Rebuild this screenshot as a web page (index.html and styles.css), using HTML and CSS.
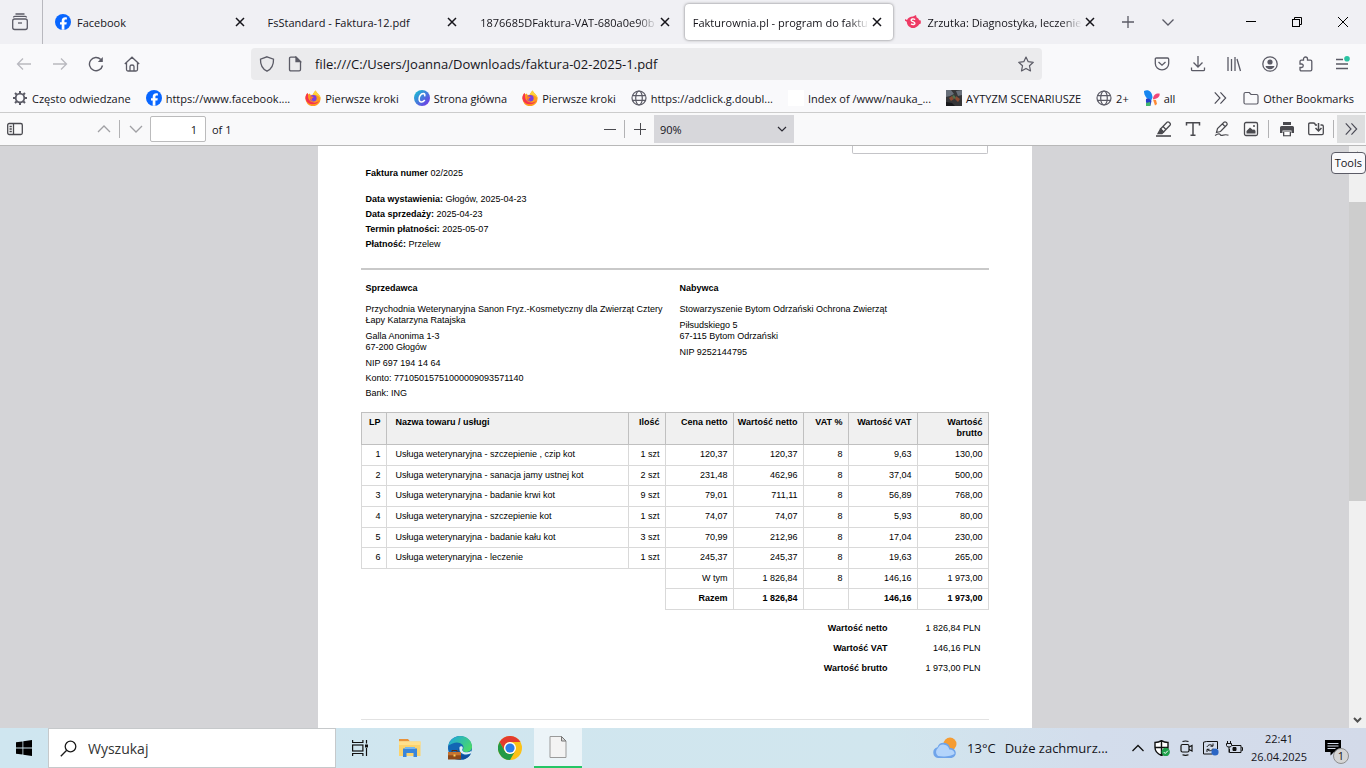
FILE: index.html
```html
<!DOCTYPE html>
<html lang="pl">
<head>
    <meta charset="UTF-8">
    <meta name="viewport" content="width=device-width, initial-scale=1.0">
    <title>Fakturownia.pl - program do faktur</title>
    <link rel="stylesheet" href="styles.css">
</head>
<body>
    <svg class="sprite" aria-hidden="true">
        <symbol id="i-close" viewBox="0 0 16 16"><path d="M4 4l8 8M12 4l-8 8" fill="none" stroke="#15141a" stroke-width="1.5"/></symbol>
        <symbol id="i-facebook" viewBox="0 0 16 16">
            <circle cx="8" cy="8" r="8" fill="#0866ff"/>
            <path d="M6.7 15.8v-5.2H5V8.2h1.7V7.1c0-2.6 1.2-3.8 3.7-3.8.5 0 1.1.1 1.5.2v2.1h-1.1c-1 0-1.4.4-1.4 1.3v1.3h2.4l-.4 2.4H9.4v5.2z" fill="#fff"/>
        </symbol>
        <symbol id="i-firefox" viewBox="0 0 16 16">
            <path d="M10.3.6c1 1.3 1.6 2 2.3 2.7 1.7 1.6 3 3.2 3 5.4A7.6 7.6 0 0 1 .4 8.5c0-2.4.9-4.4 2.1-5.5l.6 1.6c.5-.5 1.1-.8 1.7-1l.5 1.2 2.2.2C8.3 3.4 9.3 2.4 10.3.6z" fill="#ff9a1f"/>
            <path d="M10.3.6c1 1.3 1.6 2 2.3 2.7 1.7 1.6 3 3.2 3 5.4-1.1-2-2.4-3.3-4.6-3.7-1.4-.3-2.3-.2-3.5 0C8.3 3.4 9.3 2.4 10.3.6z" fill="#ffd43b"/>
            <path d="M.4 8.5c0-2.4.9-4.4 2.1-5.5l.6 1.6C2.5 8 4 12 8.5 12.6c2.5.3 4.7-.8 6-2.7A7.5 7.5 0 0 1 .4 8.5z" fill="#f6334f"/>
            <circle cx="8.3" cy="8.2" r="3.3" fill="#7a3fe0"/>
            <path d="M4.8 6.5c1.3-.5 2.3 0 3.8.4-.2 1-1.4 1-1.8 1.9-.3.9.3 1.6 1.3 1.9-2 .3-3.6-1.6-3.3-4.2z" fill="#ff7a2a"/>
        </symbol>
        <symbol id="i-globe" viewBox="0 0 16 16"><g fill="none" stroke="#5b5b66" stroke-width="1.2"><circle cx="8" cy="8" r="7"/><ellipse cx="8" cy="8" rx="3.3" ry="7"/><path d="M1.5 5.7h13M1.5 10.3h13"/></g></symbol>
        <symbol id="i-chevrons" viewBox="0 0 16 16"><path d="M2 1.5L8 8l-6 6.5M8.5 1.5l6 6.5-6 6.5" fill="none" stroke="#4a4a55" stroke-width="1.3"/></symbol>
    </svg>

    <header class="tabstrip">
        <button class="icon-btn recent" aria-label="Ostatnia aktywność">
            <svg width="18" height="18" viewBox="0 0 18 18" fill="none" stroke="#5b5b66" stroke-width="1.3"><path d="M2.5 4.5q0-1.2 1.2-1.2h10.6q1.2 0 1.2 1.2M4.5 1h9"/><rect x="1.7" y="6" width="14.6" height="10.5" rx="2"/><path d="M7 10h4"/></svg>
        </button>
        <nav class="tabs">
            <div class="tab">
                <svg class="favicon"><use href="#i-facebook"/></svg>
                <button class="tab-title">Facebook</button>
                <button class="tab-close" aria-label="Zamknij"><svg><use href="#i-close"/></svg></button>
            </div>
            <div class="tab">
                <button class="tab-title">FsStandard - Faktura-12.pdf</button>
                <button class="tab-close" aria-label="Zamknij"><svg><use href="#i-close"/></svg></button>
            </div>
            <div class="tab">
                <button class="tab-title fade">1876685DFaktura-VAT-680a0e90b</button>
                <button class="tab-close" aria-label="Zamknij"><svg><use href="#i-close"/></svg></button>
            </div>
            <div class="tab active">
                <button class="tab-title fade">Fakturownia.pl - program do faktu</button>
                <button class="tab-close" aria-label="Zamknij"><svg><use href="#i-close"/></svg></button>
            </div>
            <div class="tab">
                <svg class="favicon" viewBox="0 0 16 16"><path d="M0 5l2 1c1-2 3-3.5 6-3.5l3-1.5.5 2.2c1.5.8 2.3 1.8 2.8 3l1.5.4v3l-1.6.6c-.6 1.2-1.5 2-2.4 2.6L9.5 14H6.5L4 12.5C2.5 11.3 1.8 9.7 1.8 7.8L0 6.8z" fill="#ee3a64"/><path d="M10.2 5.5C8 4.3 6 5 6.2 6.5c.2 1.4 3.6 1 3.7 2.7.1 1.4-2 1.8-3.9.6" fill="none" stroke="#fff" stroke-width="1.4"/></svg>
                <button class="tab-title fade">Zrzutka: Diagnostyka, leczenie</button>
                <button class="tab-close" aria-label="Zamknij"><svg><use href="#i-close"/></svg></button>
            </div>
        </nav>
        <button class="icon-btn" aria-label="Nowa karta"><svg width="14" height="14" viewBox="0 0 14 14" fill="none" stroke="#5b5b66" stroke-width="1.3"><path d="M7 1v12M1 7h12"/></svg></button>
        <button class="icon-btn list-tabs" aria-label="Lista kart"><svg width="14" height="14" viewBox="0 0 14 14" fill="none" stroke="#5b5b66" stroke-width="1.3"><path d="M1.5 4.5L7 10l5.5-5.5"/></svg></button>
        <div class="window-buttons">
            <button aria-label="Minimalizuj"><svg width="12" height="12" viewBox="0 0 12 12" fill="none" stroke="#000"><path d="M1 5.5h10"/></svg></button>
            <button aria-label="Przywróć"><svg width="12" height="12" viewBox="0 0 12 12" fill="none" stroke="#000"><rect x="1.5" y="3.5" width="7" height="7"/><path d="M3.5 3.5v-2h7v7h-2"/></svg></button>
            <button aria-label="Zamknij okno"><svg width="12" height="12" viewBox="0 0 12 12" fill="none" stroke="#000"><path d="M1 1l10 10M11 1L1 11"/></svg></button>
        </div>
    </header>

    <div class="navbar">
        <div class="nav-buttons">
            <button class="icon-btn" aria-label="Wstecz" disabled><svg width="16" height="16" viewBox="0 0 16 16" fill="none" stroke="#b9b9bf" stroke-width="1.3"><path d="M15 8H2M7 2.5L1.5 8 7 13.5"/></svg></button>
            <button class="icon-btn" aria-label="Dalej" disabled><svg width="16" height="16" viewBox="0 0 16 16" fill="none" stroke="#b9b9bf" stroke-width="1.3"><path d="M1 8h13M9 2.5L14.5 8 9 13.5"/></svg></button>
            <button class="icon-btn" aria-label="Odśwież"><svg width="16" height="16" viewBox="0 0 16 16" fill="none" stroke="#5b5b66" stroke-width="1.4"><path d="M14.5 9.5A6.6 6.6 0 1 1 12.8 3.5"/><path d="M14.8 1v5h-5z" fill="#5b5b66" stroke="none"/></svg></button>
            <button class="icon-btn" aria-label="Strona startowa"><svg width="16" height="16" viewBox="0 0 16 16" fill="none" stroke="#5b5b66" stroke-width="1.3"><path d="M.8 8L8 1.2 15.2 8M2.5 7v6.5q0 1.5 1.5 1.5h8q1.5 0 1.5-1.5V7M6 15v-4.5q0-1.5 2-1.5t2 1.5V15"/></svg></button>
        </div>
        <div class="urlbar">
            <svg width="16" height="16" viewBox="0 0 16 16" fill="none" stroke="#5b5b66" stroke-width="1.3"><path d="M8 .8l6.5 2.4c.2 5-1.5 9.5-6.5 12-5-2.5-6.700-7-6.5-12z"/></svg>
            <svg width="16" height="16" viewBox="0 0 16 16" fill="none" stroke="#5b5b66" stroke-width="1.3"><path d="M3.8 1.2H9l4.5 4.5v7.8q0 1.3-1.3 1.3H3.8q-1.3 0-1.3-1.3V2.5q0-1.3 1.3-1.3z"/><path d="M9 1.2v4.5h4.5z" fill="#5b5b66"/></svg>
            <input class="url" type="text" aria-label="Adres" value="file:///C:/Users/Joanna/Downloads/faktura-02-2025-1.pdf">
            <button class="icon-btn" aria-label="Dodaj zakładkę"><svg width="16" height="16" viewBox="0 0 16 16" fill="none" stroke="#5b5b66" stroke-width="1.2" stroke-linejoin="round"><path d="M8 1l2.2 4.7 5.1.6-3.8 3.5 1 5.1L8 12.4l-4.5 2.5 1-5.1L.7 6.3l5.1-.6z"/></svg></button>
        </div>
        <div class="nav-tools">
            <button class="icon-btn" aria-label="Pocket"><svg width="16" height="16" viewBox="0 0 16 16" fill="none" stroke="#5b5b66" stroke-width="1.3"><path d="M2.5 2h11q1.2 0 1.2 1.2V7.5a6.7 6.3 0 0 1-13.4 0V3.2Q1.3 2 2.5 2z"/><path d="M4.5 6L8 9.2 11.5 6"/></svg></button>
            <button class="icon-btn" aria-label="Pobrane"><svg width="16" height="16" viewBox="0 0 16 16" fill="none" stroke="#5b5b66" stroke-width="1.3"><path d="M8 0v10.5M3.5 6.5L8 11l4.5-4.5M1.5 11.5v2q0 1.2 1.2 1.2h10.6q1.2 0 1.2-1.2v-2"/></svg></button>
            <button class="icon-btn" aria-label="Biblioteka"><svg width="16" height="16" viewBox="0 0 16 16" fill="none" stroke="#5b5b66" stroke-width="1.3"><path d="M2 1v14M5.5 3v12M9 1v14M11 3l3.5 12"/></svg></button>
            <button class="icon-btn" aria-label="Konto"><svg width="16" height="16" viewBox="0 0 16 16"><circle cx="8" cy="8" r="7.2" fill="none" stroke="#5b5b66" stroke-width="1.3"/><circle cx="8" cy="6" r="2.6" fill="#5b5b66"/><path d="M3.5 10h9c-.5 2-2.2 3.2-4.5 3.2S4 12 3.5 10z" fill="#5b5b66"/></svg></button>
            <button class="icon-btn" aria-label="Rozszerzenia"><svg width="16" height="16" viewBox="0 0 16 16" fill="none" stroke="#5b5b66" stroke-width="1.3"><path d="M5.5 4.2V3a2 2 0 0 1 4 0v1.2h3q1.3 0 1.3 1.3v8q0 1.3-1.3 1.3H3.3Q2 14.8 2 13.5v-2h1.5a1.7 1.7 0 0 0 0-3.5H2V5.5q0-1.3 1.3-1.3z"/></svg></button>
            <button class="icon-btn" aria-label="Menu"><svg width="16" height="16" viewBox="0 0 16 16"><path d="M2 3.5h7M2 8h12M2 12.5h12" stroke="#5b5b66" stroke-width="1.3"/><circle cx="13" cy="2.8" r="2.8" fill="#2ac3a2"/></svg></button>
        </div>
    </div>

    <nav class="bookmarks">
        <a href="#"><svg viewBox="0 0 16 16" fill="none" stroke="#5b5b66"><circle cx="8" cy="8" r="4.3" stroke-width="1.8"/><path d="M8 1v2.5M8 12.5V15M1 8h2.5M12.5 8H15M3 3l1.8 1.8M11.2 11.2L13 13M13 3l-1.8 1.8M4.8 11.2L3 13" stroke-width="2"/></svg>Często odwiedzane</a>
        <a href="#"><svg><use href="#i-facebook"/></svg>https://www.facebook....</a>
        <a href="#"><svg><use href="#i-firefox"/></svg>Pierwsze kroki</a>
        <a href="#"><svg viewBox="0 0 16 16"><defs><linearGradient id="canva" x1="0" y1="0" x2="1" y2="1"><stop offset="0" stop-color="#12c8d0"/><stop offset="1" stop-color="#7a2be8"/></linearGradient></defs><circle cx="8" cy="8" r="8" fill="url(#canva)"/><path d="M10.500 6.300c.8-1.400.2-2.800-1.200-2.800-2.500.1-4.500 3.200-4.200 6 .3 3.200 3.700 3.300 5.700.5" fill="none" stroke="#fff" stroke-width="1.5"/></svg>Strona główna</a>
        <a href="#"><svg><use href="#i-firefox"/></svg>Pierwsze kroki</a>
        <a href="#"><svg><use href="#i-globe"/></svg>https://adclick.g.doubl...</a>
        <a href="#"><svg viewBox="0 0 16 16"><path d="M0 0h16v16H0z" fill="#fff"/></svg>Index of /www/nauka_...</a>
        <a href="#"><svg viewBox="0 0 16 16"><path d="M0 0h16v16H0z" fill="#363638"/><path d="M0 0h5l3 4-4 2-4 1zM10 1l6-1v5l-4 1z" fill="#69707a"/><path d="M3 8l3-2 2 3-3 2zM10 6l4 3-2 3-3-3z" fill="#8a4b32"/><path d="M6 6l2-1 2 3-2 1z" fill="#52714b"/><path d="M0 12l6 1 3 3H0z" fill="#17181b"/></svg>AYTYZM SCENARIUSZE</a>
        <a href="#"><svg><use href="#i-globe"/></svg>2+</a>
        <a href="#"><svg viewBox="0 0 16 16"><path d="M0 1c4-2 8 0 8.5 6.5L7 11C3 9 0 6 0 1z" fill="#1686f0"/><path d="M9 9c0-4 3-6 6.5-5.5.8 3-2 5.5-6.5 5.5z" fill="#ef4778"/><path d="M2 9c2-1 4.5 0 5.5 2l-1 4.5C3 16 1.5 13 2 9z" fill="#263ecb"/><path d="M2 13l4-1 .5 4H2z" fill="#43b66c"/><path d="M9 9.5l3 .5 1 4-2 1.5z" fill="#ff8a35"/></svg>all</a>
        <button class="icon-btn overflow" aria-label="Więcej zakładek"><svg width="14" height="14"><use href="#i-chevrons"/></svg></button>
        <a href="#"><svg viewBox="0 0 16 16" fill="none" stroke="#5b5b66" stroke-width="1.2"><path d="M2.5 2.5h3.8l1.7 2h5.5q1.5 0 1.5 1.5v6.5q0 1.5-1.5 1.5h-11Q1 14 1 12.5V4q0-1.5 1.5-1.5z"/></svg>Other Bookmarks</a>
    </nav>

    <div class="pdf-toolbar">
        <div class="group left">
            <button class="icon-btn sidebar-btn" aria-label="Panel boczny"><svg width="16" height="16" viewBox="0 0 16 16" fill="none" stroke="#4a4a4f" stroke-width="1.3"><rect x=".7" y="2.5" width="14.6" height="11" rx="1.5"/><path d="M6.5 2.5v11M2.5 5.5h2.3M2.5 8h2.3M2.5 10.5h2.3"/></svg></button>
            <button class="icon-btn" aria-label="Poprzednia strona" disabled><svg width="14" height="14" viewBox="0 0 14 14" fill="none" stroke="#a0a0a4" stroke-width="1.3"><path d="M1 10l6-6 6 6"/></svg></button>
            <span class="split"></span>
            <button class="icon-btn" aria-label="Następna strona" disabled><svg width="14" height="14" viewBox="0 0 14 14" fill="none" stroke="#a0a0a4" stroke-width="1.3"><path d="M1 4l6 6 6-6"/></svg></button>
            <input class="page-number" id="page" type="text" value="1">
            <label for="page">of 1</label>
        </div>
        <div class="group center">
            <button class="icon-btn" aria-label="Pomniejsz"><svg width="12" height="12" viewBox="0 0 12 12" stroke="#4a4a4f"><path d="M0 6.5h12"/></svg></button>
            <span class="split"></span>
            <button class="icon-btn" aria-label="Powiększ"><svg width="12" height="12" viewBox="0 0 12 12" stroke="#4a4a4f"><path d="M0 6.5h12M6.5 0v12"/></svg></button>
            <span class="zoom">
                <select aria-label="Powiększenie"><option>90%</option></select>
                <svg width="10" height="10" viewBox="0 0 10 10" fill="none" stroke="#2b2a33" stroke-width="1.2"><path d="M1 3l4 4 4-4"/></svg>
            </span>
        </div>
        <div class="group right">
            <button class="icon-btn" aria-label="Wyróżnij"><svg width="16" height="16" viewBox="0 0 16 16" fill="none" stroke="#4a4a4f" stroke-width="1.3"><path d="M0 15h15" stroke-width="1.6"/><path d="M4.5 8L11 1.2q1-.8 2 0l1 1q.8 1 0 2L7.5 11zM7 5.5l3 3"/><path d="M4.5 8L7.5 11 6 12.5H2z" fill="#4a4a4f"/></svg></button>
            <button class="icon-btn" aria-label="Tekst"><svg width="16" height="16" viewBox="0 0 16 16" fill="none" stroke="#4a4a4f" stroke-width="1.5"><path d="M1.5 4.5V1.8h13v2.7M8 1.8v12.5M5.5 14.3h5"/></svg></button>
            <button class="icon-btn" aria-label="Rysuj"><svg width="16" height="16" viewBox="0 0 16 16" fill="none" stroke="#4a4a4f" stroke-width="1.2"><path d="M2.5 11.5l1-4L10 1.2q1-.8 2 0l.8.8q.8 1 0 2L6.5 10.5zM8.5 3l3 3M1 14.5c4-2.5 5-1.5 5.5-.5 1.5 1.5 4-1.5 8 .3"/></svg></button>
            <button class="icon-btn" aria-label="Dodaj obraz"><svg width="16" height="16" viewBox="0 0 16 16" fill="none" stroke="#4a4a4f" stroke-width="1.3"><rect x="1.5" y="1.5" width="13" height="13" rx="1.5"/><path d="M3.5 12.5V10L7 6.5l3 2.5 1-.8 1.5 1.5v2.8z" fill="#4a4a4f" stroke="none"/><circle cx="11" cy="5" r="1" fill="#4a4a4f" stroke="none"/></svg></button>
            <span class="split"></span>
            <button class="icon-btn" aria-label="Drukuj"><svg width="16" height="16" viewBox="0 0 16 16" fill="#4a4a4f"><path d="M4 1h8v3H4zM2.5 5h11q1.5 0 1.5 1.5V12h-2.5V9.5h-9V12H1V6.5Q1 5 2.5 5z"/><path d="M4 10.5h8v4.8H4z"/><path d="M5.3 11h5.4v3.2H5.3z" fill="#fff"/></svg></button>
            <button class="icon-btn" aria-label="Zapisz"><svg width="16" height="16" viewBox="0 0 16 16" fill="none" stroke="#4a4a4f" stroke-width="1.3"><path d="M8.5 4H9M12.5 4H14q1.3 0 1.3 1.3v7q0 1.3-1.3 1.3H2Q.7 13.6.7 12.3v-9Q.7 2 2 2h3.5q1.5 0 2 2h1.5"/><path d="M10.5 2v7.5M7.5 7l3 3 3-3" stroke-width="1.5"/></svg></button>
            <span class="split"></span>
            <div class="tools">
                <button class="tools-btn" aria-label="Tools" aria-describedby="tools-tip"><svg width="14" height="14"><use href="#i-chevrons"/></svg></button>
                <span class="tooltip" id="tools-tip" role="tooltip">Tools</span>
            </div>
        </div>
    </div>

    <div class="viewer">
        <main class="canvas">
            <article class="sheet">
                <div class="place-box"></div>
                <section class="meta">
                    <p class="number"><b>Faktura numer</b> 02/2025</p>
                    <p><b>Data wystawienia:</b> Głogów, 2025-04-23</p>
                    <p><b>Data sprzedaży:</b> 2025-04-23</p>
                    <p><b>Termin płatności:</b> 2025-05-07</p>
                    <p><b>Płatność:</b> Przelew</p>
                </section>
                <section class="parties">
                    <div>
                        <h2>Sprzedawca</h2>
                        <p>Przychodnia Weterynaryjna Sanon Fryz.-Kosmetyczny dla Zwierząt Cztery<br>Łapy Katarzyna Ratajska</p>
                        <p class="address">Galla Anonima 1-3<br>67-200 Głogów</p>
                        <p>NIP 697 194 14 64</p>
                        <p>Konto: 77105015751000009093571140</p>
                        <p>Bank: ING</p>
                    </div>
                    <div>
                        <h2>Nabywca</h2>
                        <p>Stowarzyszenie Bytom Odrzański Ochrona Zwierząt</p>
                        <p class="address">Piłsudskiego 5<br>67-115 Bytom Odrzański</p>
                        <p>NIP 9252144795</p>
                    </div>
                </section>
                <table class="items">
                    <colgroup>
                        <col class="c-lp"><col><col class="c-qty"><col class="c-price"><col class="c-net"><col class="c-rate"><col class="c-vat"><col class="c-gross">
                    </colgroup>
                    <thead>
                        <tr><th>LP</th><th class="name">Nazwa towaru / usługi</th><th>Ilość</th><th>Cena netto</th><th>Wartość netto</th><th>VAT %</th><th>Wartość VAT</th><th>Wartość brutto</th></tr>
                    </thead>
                    <tbody>
                        <tr><td>1</td><td class="name">Usługa weterynaryjna - szczepienie , czip kot</td><td>1 szt</td><td>120,37</td><td>120,37</td><td>8</td><td>9,63</td><td>130,00</td></tr>
                        <tr><td>2</td><td class="name">Usługa weterynaryjna - sanacja jamy ustnej kot</td><td>2 szt</td><td>231,48</td><td>462,96</td><td>8</td><td>37,04</td><td>500,00</td></tr>
                        <tr><td>3</td><td class="name">Usługa weterynaryjna - badanie krwi kot</td><td>9 szt</td><td>79,01</td><td>711,11</td><td>8</td><td>56,89</td><td>768,00</td></tr>
                        <tr><td>4</td><td class="name">Usługa weterynaryjna - szczepienie kot</td><td>1 szt</td><td>74,07</td><td>74,07</td><td>8</td><td>5,93</td><td>80,00</td></tr>
                        <tr><td>5</td><td class="name">Usługa weterynaryjna - badanie kału kot</td><td>3 szt</td><td>70,99</td><td>212,96</td><td>8</td><td>17,04</td><td>230,00</td></tr>
                        <tr><td>6</td><td class="name">Usługa weterynaryjna - leczenie</td><td>1 szt</td><td>245,37</td><td>245,37</td><td>8</td><td>19,63</td><td>265,00</td></tr>
                        <tr><td class="blank" colspan="3"></td><td>W tym</td><td>1 826,84</td><td>8</td><td>146,16</td><td>1 973,00</td></tr>
                        <tr class="total"><td class="blank" colspan="3"></td><td>Razem</td><td>1 826,84</td><td></td><td>146,16</td><td>1 973,00</td></tr>
                    </tbody>
                </table>
                <dl class="summary">
                    <dt>Wartość netto</dt><dd>1 826,84 PLN</dd>
                    <dt>Wartość VAT</dt><dd>146,16 PLN</dd>
                    <dt>Wartość brutto</dt><dd>1 973,00 PLN</dd>
                </dl>
                <hr class="end-line">
            </article>
        </main>
        <div class="scrollbar">
            <svg width="9" height="6" viewBox="0 0 9 6" fill="none" stroke="#505050" stroke-width="1.5"><path d="M1 5l3.5-3.5L8 5"/></svg>
            <div class="track"><div class="thumb"></div></div>
            <svg width="9" height="6" viewBox="0 0 9 6" fill="none" stroke="#505050" stroke-width="2"><path d="M1 1l3.5 3.5L8 1"/></svg>
        </div>
    </div>

    <footer class="taskbar">
        <button class="start" aria-label="Start"><svg width="16" height="16" viewBox="0 0 16 16"><path d="M0 2.3L6.5 1.4v6.2H0zM7.3 1.3L16 0v7.6H7.3zM0 8.4h6.5v6.2L0 13.7zM7.3 8.4H16V16l-8.700-1.3z"/></svg></button>
        <label class="search">
            <svg width="17" height="17" viewBox="0 0 17 17" fill="none" stroke="#1b1b1b" stroke-width="1.3"><circle cx="10.5" cy="6.5" r="5.3"/><path d="M6.7 10.3L.8 16.2"/></svg>
            <input type="text" placeholder="Wyszukaj" aria-label="Wyszukaj">
        </label>
        <div class="apps">
            <button aria-label="Widok zadań"><svg width="16" height="16" viewBox="0 0 16 16" fill="none" stroke="#111" stroke-width="1.2"><path d="M.6 0v2.5h10.3V0M.6 16v-2.5h10.3V16M14.5 0v3.5M14.5 8v8"/><rect x=".6" y="5" width="10.3" height="6"/><path d="M13 4.5h3v3h-3z" fill="#111" stroke="none"/></svg></button>
            <button aria-label="Eksplorator plików"><svg width="24" height="24" viewBox="0 0 24 24"><path d="M1 3h9l2 2.5H1z" fill="#e8923a"/><path d="M1 5.5h21.5V20H1z" fill="#fcd36b"/><path d="M1 5.5h21.5V9H1z" fill="#ffe08c"/><path d="M5 12.5h14V21h-3.5v-4h-7v4H5z" fill="#3a86da"/><path d="M7 11h10v2H7z" fill="#74b7f0"/></svg></button>
            <button aria-label="Edge"><svg width="24" height="24" viewBox="0 0 24 24"><defs><linearGradient id="edge" x1="0" y1="0" x2="1" y2=".6"><stop offset="0" stop-color="#1ba3e6"/><stop offset="1" stop-color="#48d86c"/></linearGradient></defs><circle cx="12" cy="12" r="12" fill="#1267b4"/><path d="M.3 9.5C2 3.5 7 0 12 0c7 0 12 5 12 10.5 0 4-3 5.5-6 5.5-2.5 0-4-1-3-2.5 2-4-2-7-6-7-3 0-6 1.5-8.700 3z" fill="url(#edge)"/><path d="M12.5 9.5c-3 3-2 8 2.5 9.5 3 1 6 .2 8-1.5-1.5 3-4.5 5.5-8 6-5-2-7.5-9-2.5-14z" fill="#0d4f9e"/><path d="M11.5 11c1-1 3-1 3.3.8.1 1-1 1.7-.3 3 1.5 2 6 2 9 0v2c-4 3-13 2.5-12-5.8z" fill="#dff0f5"/><path d="M0 16h13v7.5H0z" fill="#8c4819"/><path d="M0 16h13v3.3H0z" fill="#c47230"/><path d="M4 16v-1.5h5V16" fill="none" stroke="#5e2b0c"/><path d="M5.5 18.5h2v2h-2z" fill="#ffd15a"/></svg></button>
            <button aria-label="Chrome"><svg width="24" height="24" viewBox="0 0 24 24"><circle cx="12" cy="12" r="12" fill="#fbc116"/><path d="M1.6 6A12 12 0 0 1 22.4 6H12a6 6 0 0 0-5.2 9z" fill="#e33b2e"/><path d="M1.6 6A12 12 0 0 0 12 24l5.2-9a6 6 0 0 1-10.4 0z" fill="#229a47"/><circle cx="12" cy="12" r="6" fill="#fff"/><circle cx="12" cy="12" r="4.6" fill="#2b7de9"/></svg></button>
            <button class="current" aria-label="Dokument"><svg width="18" height="22" viewBox="0 0 18 22"><path d="M1 .5h11.5L17 5v16.5H1z" fill="#f3f3f3" stroke="#9a9a9a"/><path d="M12.5.5V5H17z" fill="#d9d9d9" stroke="#777"/></svg></button>
        </div>
        <div class="tray">
            <button class="weather">
                <svg width="26" height="22" viewBox="0 0 26 22"><circle cx="18" cy="7" r="6.5" fill="#f59c33"/><path d="M6 21a5.5 5.5 0 0 1-.5-10.8A6.5 6.5 0 0 1 18 11a5 5 0 0 1 1.5 10z" fill="#6fa4ea"/><path d="M6 19a5 5 0 0 1 0-8 6 6 0 0 1 11.3 1.5c3 0 5 1.5 5.3 4-2 3-12 3.5-16.6 2.5z" fill="#b3d4fb"/></svg>
                <span>13°C</span><span>Duże zachmurz...</span>
            </button>
            <button aria-label="Ukryte ikony"><svg width="12" height="12" viewBox="0 0 12 12" fill="none" stroke="#111" stroke-width="1.3"><path d="M.5 9L6 3.5 11.5 9"/></svg></button>
            <button aria-label="Zabezpieczenia"><svg width="16" height="16" viewBox="0 0 16 16"><path d="M7.5.7C9.5 2 11.5 2.5 14 2.5v5c0 4-3 6.5-6.5 8C4 14 1 11.5 1 7.5v-5C3.5 2.5 5.5 2 7.5.7zM7.5 1v14.5M1 7.5h13" fill="#fff" stroke="#111" stroke-width="1.4"/><circle cx="11.7" cy="12" r="4.2" fill="#1fa04b"/><path d="M9.7 12l1.5 1.5 2.7-2.8" fill="none" stroke="#fff"/></svg></button>
            <button aria-label="Spotkanie"><svg width="16" height="16" viewBox="0 0 16 16" fill="none" stroke="#111" stroke-width="1.2"><rect x="3" y="4.5" width="8" height="7.5" rx="1.5"/><path d="M11 7l3-1.5v5.5L11 9.5M4.5 1.5q3-1 6 0M4.5 14.8q3 1 6 0"/></svg></button>
            <button aria-label="Synchronizacja"><svg width="17" height="16" viewBox="0 0 17 16" fill="none" stroke="#111"><path d="M4.5 1.500h11V9M4.500 1.500l-3 .7V14h8.500"/><path d="M5 7c1-2.500 4-3 5.500-1M11 3.500v2.700H8.500M11 8.500c-1 2.500-4 3-5.500 1M5 12V9.300h2.500"/><circle cx="13" cy="12" r="3.6" fill="#2b65c4" stroke="none"/></svg></button>
            <button aria-label="Bateria"><svg width="17" height="14" viewBox="0 0 17 14" fill="none" stroke="#111"><path d="M6 4.5h9v7H3.5V8M15.5 6.5h1v3h-1M1.5 0v2M4.5 0v2M.5 2.5h5v2q0 1.5-2.5 1.5T.5 4.5zM3 6v5.5"/><path d="M7 6.5h3v3H7z" fill="#111"/></svg></button>
            <button class="clock"><span>22:41</span><span>26.04.2025</span></button>
            <button class="notify" aria-label="Powiadomienia">
                <svg width="18" height="16" viewBox="0 0 18 16"><path d="M1 0h16v12h-7l-3.5 3.5V12H1z" fill="#000"/><path d="M3.5 3.5h11M3.5 6h11M3.5 8.5h8" stroke="#d3dcea"/></svg>
                <span class="badge">1</span>
            </button>
        </div>
    </footer>
</body>
</html>
```
FILE: styles.css
```css
* {
    box-sizing: border-box;
}
body {
    margin: 0;
    height: 100vh;
    display: flex;
    flex-direction: column;
    overflow: hidden;
    font-family: "Open Sans", "Noto Sans", sans-serif;
    font-size: 11px;
    color: #15141a;
    background: #f9f9fb;
}
button, input, select {
    margin: 0;
    padding: 0;
    border: 0;
    background: none;
    font: inherit;
    color: inherit;
}
svg {
    display: block;
    flex: none;
}
a {
    color: inherit;
    text-decoration: none;
}
p, h2, dl, dd {
    margin: 0;
}
.sprite {
    display: none;
}
.icon-btn {
    display: flex;
    align-items: center;
    justify-content: center;
    flex: none;
    width: 36px;
    height: 32px;
}

/* tabs */
.tabstrip {
    display: flex;
    align-items: center;
    flex: none;
    height: 44px;
    background: #f0f0f4;
}
.recent {
    width: 43px;
    height: 44px;
    padding-right: 3px;
    border-right: 1px solid #b8b8be;
}
.tabs {
    display: flex;
    gap: 4px;
    padding: 0 4px;
    flex: 0 1 1067px;
    min-width: 0;
}
.tab {
    display: flex;
    align-items: center;
    flex: 1 1 0;
    min-width: 0;
    height: 36px;
    padding: 0 8px;
    border-radius: 4px;
}
.tab.active {
    background: #fff;
    box-shadow: 0 0 3px rgba(0,0,0,0.5);
}
.favicon {
    width: 16px;
    height: 16px;
    margin-right: 6px;
}
.tab-title {
    flex: 1;
    min-width: 0;
    overflow: hidden;
    white-space: nowrap;
    text-align: left;
}
.fade {
    -webkit-mask-image: linear-gradient(to left, transparent, #000 20px);
    mask-image: linear-gradient(to left, transparent, #000 20px);
}
.tab-close svg {
    width: 16px;
    height: 16px;
}
.list-tabs {
    margin-left: 4px;
}
.window-buttons {
    display: flex;
    margin-left: auto;
}
.window-buttons button {
    display: flex;
    align-items: center;
    justify-content: center;
    width: 46px;
    height: 44px;
}

/* address bar */
.navbar {
    display: flex;
    align-items: center;
    flex: none;
    height: 40px;
    padding: 0 6px;
}
.nav-buttons {
    display: flex;
    width: 245px;
}
.urlbar {
    display: flex;
    align-items: center;
    gap: 12px;
    flex: 0 1 791px;
    height: 32px;
    padding-left: 8px;
    border-radius: 4px;
    background: #ebebed;
}
.urlbar .icon-btn {
    width: 32px;
}
.url {
    flex: 1;
    min-width: 0;
    font-size: 13px;
    outline: none;
}
.nav-tools {
    display: flex;
    margin-left: auto;
}

/* bookmarks */
.bookmarks {
    display: flex;
    align-items: center;
    flex: none;
    height: 29px;
    padding: 0 12px;
    gap: 15px;
    border-bottom: 1px solid #cccccc;
    white-space: nowrap;
}
.bookmarks a {
    display: flex;
    align-items: center;
    gap: 4px;
}
.bookmarks a svg {
    width: 16px;
    height: 16px;
}
.overflow {
    width: 16px;
    margin-left: auto;
}

/* pdf toolbar */
.pdf-toolbar {
    display: flex;
    align-items: center;
    justify-content: space-between;
    flex: none;
    height: 33px;
    border-bottom: 1px solid #b8b8b8;
    background: #f9f9fa;
}
.group {
    display: flex;
    align-items: center;
}
.left, .right {
    flex: 1;
}
.center {
    padding-left: 24px;
}
.right {
    justify-content: flex-end;
    padding-right: 1px;
}
.group .icon-btn {
    width: 29px;
}
.group .sidebar-btn {
    margin-right: 60px;
}
.split {
    width: 1px;
    height: 18px;
    background: #b2b2b4;
}
.left .split {
    margin: 0 1px;
}
.page-number {
    width: 56px;
    height: 26px;
    margin-right: 6px;
    padding: 0 8px;
    border: 1px solid #bbbbbc;
    border-radius: 2px;
    background: #fff;
    text-align: right;
}
.zoom {
    display: flex;
    align-items: center;
    width: 140px;
    height: 28px;
    background: #d7d7db;
}
.zoom select {
    flex: 1;
    height: 28px;
    padding-left: 6px;
    appearance: none;
}
.zoom svg {
    margin-right: 7px;
}
.right .split {
    margin: 0 3px;
}
.tools {
    position: relative;
}
.tools-btn {
    display: flex;
    align-items: center;
    justify-content: center;
    width: 28px;
    height: 28px;
    background: #dddedf;
}
.tooltip {
    position: absolute;
    top: 37px;
    right: -1px;
    z-index: 2;
    padding: 2px 3px;
    line-height: 16px;
    border: 1px solid #5b5b66;
    border-radius: 4px;
    background: #f9f9fb;
}

/* document */
.viewer {
    display: flex;
    flex: 1;
    min-height: 0;
    background: #d4d4d7;
}
.canvas {
    flex: 1;
    min-width: 0;
    overflow: hidden;
}
.sheet {
    width: 714px;
    max-width: 100%;
    min-height: 100%;
    margin: 0 auto;
    padding: 0 43px;
    background: #fff;
    font-family: "Liberation Sans", Arial, sans-serif;
    font-size: 9px;
    line-height: 11px;
    color: #000;
}
.place-box {
    width: 136px;
    height: 8px;
    margin: 0 1px 0 auto;
    border: 1px solid #c4c4c8;
    border-top: 0;
    border-radius: 0 0 2px 2px;
}
.meta {
    padding: 14px 5px 18px;
    border-bottom: 2px solid #c9c9c9;
}
.meta p + p {
    margin-top: 4px;
}
.meta .number {
    margin-bottom: 15px;
}
.parties {
    display: grid;
    grid-template-columns: 1fr 304px;
    padding: 13px 5px;
}
.parties h2 {
    margin-bottom: 10px;
    font-size: 9px;
}
.parties p + p {
    margin-top: 4px;
}
.parties p.address {
    margin: 5px 0;
}
.items {
    width: 100%;
    height: 198px;
    table-layout: fixed;
    border-collapse: collapse;
}
.items th, .items td {
    height: 20px;
    padding: 4px 5px 0;
    border: 1px solid #d9d9d9;
    text-align: right;
    vertical-align: top;
}
.items th {
    height: 32px;
    padding-left: 3px;
    border-color: #c0c0c0;
    background: #f0f0f0;
}
.items .name {
    padding-left: 9px;
    text-align: left;
}
.items .blank {
    border: 0;
}
.c-lp { width: 25px; }
.c-qty { width: 37px; }
.c-price { width: 68px; }
.c-net { width: 70px; }
.c-rate { width: 45px; }
.c-vat { width: 69px; }
.c-gross { width: 71px; }
.total {
    font-weight: bold;
}
.summary {
    display: grid;
    grid-template-columns: 1fr 93px;
    row-gap: 9px;
    padding: 13px 8px 45px 0;
    text-align: right;
}
.summary dt {
    font-weight: bold;
}
.end-line {
    margin: 0;
    border: 0;
    border-top: 1px solid #e2e2e2;
}
.scrollbar {
    display: flex;
    flex-direction: column;
    align-items: center;
    width: 17px;
    padding: 5px 0;
    background: #f0f0f0;
}
.track {
    flex: 1;
    width: 100%;
    padding-top: 45px;
}
.thumb {
    height: 58%;
    background: #cdcdcd;
}

/* taskbar */
.taskbar {
    display: flex;
    flex: none;
    height: 40px;
    background: linear-gradient(to right, #cfe6f0, #d1e6ee 65%, #d3ddec 80%, #d3dae9);
}
.taskbar button {
    display: flex;
    align-items: center;
    justify-content: center;
}
.start {
    width: 48px;
}
.search {
    display: flex;
    align-items: center;
    gap: 11px;
    width: 288px;
    padding-left: 11px;
    border: 1px solid #c6c9cb;
    background: #fff;
}
.search input {
    flex: 1;
    min-width: 0;
    font-size: 14px;
    outline: none;
}
.search input::placeholder {
    color: #333;
    opacity: 1;
}
.apps {
    display: flex;
}
.apps button {
    width: 48px;
}
.apps button + button {
    margin-left: 2px;
}
.apps button.current {
    margin-left: 0;
    border-bottom: 2px solid #26c666;
    background: #ecf4f8;
}
.tray {
    display: flex;
    margin-left: auto;
}
.tray button {
    width: 24px;
}
.tray .weather {
    width: auto;
    gap: 9px;
    margin-right: 18px;
    font-size: 13px;
    white-space: nowrap;
}
.tray .clock {
    flex-direction: column;
    width: 66px;
    line-height: 18px;
}
.tray .notify {
    position: relative;
    width: 42px;
    margin-right: 12px;
}
.badge {
    position: absolute;
    right: 5px;
    bottom: 4px;
    width: 16px;
    line-height: 14px;
    border: 1px solid #8e8e8e;
    border-radius: 50%;
    background: #d5d5d5;
}
```
